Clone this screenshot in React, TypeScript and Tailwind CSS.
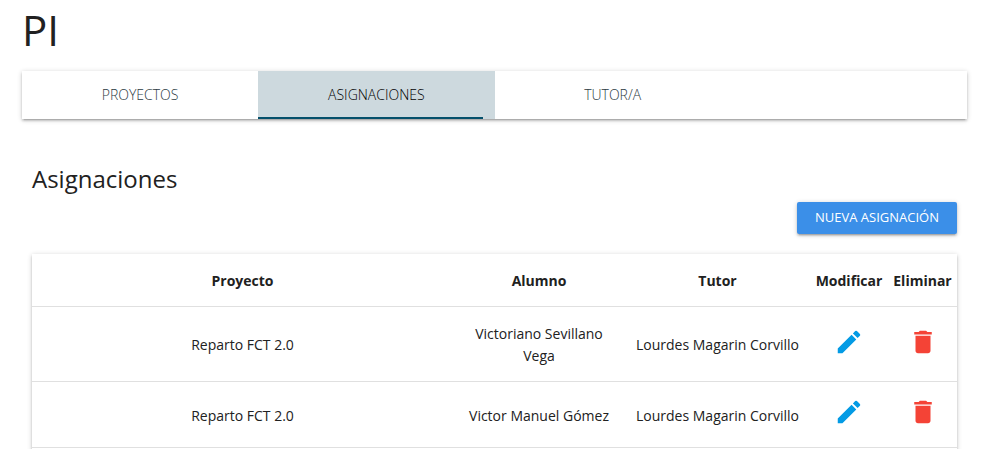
import { MdDelete, MdEdit } from "react-icons/md";

const tabs = [
  { label: "Proyectos", active: false },
  { label: "Asignaciones", active: true },
  { label: "Tutor/a", active: false },
];

const rows = [
  { proyecto: "Reparto FCT 2.0", alumno: "Victoriano Sevillano Vega", tutor: "Lourdes Magarin Corvillo" },
  { proyecto: "Reparto FCT 2.0", alumno: "Victor Manuel Gómez", tutor: "Lourdes Magarin Corvillo" },
];

const raised =
  "shadow-[0_2px_2px_0_rgba(0,0,0,0.14),0_3px_1px_-2px_rgba(0,0,0,0.12),0_1px_5px_0_rgba(0,0,0,0.2)]";

function Tabs() {
  return (
    <nav className={`mt-3 flex h-12 bg-white ${raised}`}>
      {tabs.map((tab) => (
        <a
          key={tab.label}
          href="#"
          aria-current={tab.active ? "page" : undefined}
          className={`relative flex w-1/4 items-center justify-center text-sm font-light uppercase ${
            tab.active ? "bg-[#cdd9de] text-black" : "text-[#2b3a42]"
          }`}
        >
          {tab.label}
          {tab.active && <span className="absolute bottom-0 left-0 h-0.5 w-[95%] bg-[#04506b]" />}
        </a>
      ))}
    </nav>
  );
}

function AssignmentsTable() {
  return (
    <div className={`mt-5 bg-white pb-4 ${raised}`}>
      <table className="w-full table-fixed border-separate border-spacing-0 text-center text-sm leading-[22px]">
        <colgroup>
          <col />
          <col className="w-[172px]" />
          <col className="w-[185px]" />
          <col className="w-[78px]" />
          <col className="w-[69px]" />
        </colgroup>
        <thead>
          <tr>
            {["Proyecto", "Alumno", "Tutor", "Modificar", "Eliminar"].map((title) => (
              <th key={title} scope="col" className="border-b border-[#e0e0e0] pt-4 pb-[14px] font-bold">
                {title}
              </th>
            ))}
          </tr>
        </thead>
        <tbody>
          {rows.map((row) => (
            <tr key={row.alumno}>
              <td className="border-b border-[#e0e0e0] px-1 pt-4 pb-[14px]">{row.proyecto}</td>
              <td className="border-b border-[#e0e0e0] px-3 pt-4 pb-[14px]">{row.alumno}</td>
              <td className="border-b border-[#e0e0e0] px-1 pt-4 pb-[14px]">{row.tutor}</td>
              <td className="border-b border-[#e0e0e0] pt-[15px] pb-5">
                <button type="button" aria-label={`Modificar ${row.alumno}`} className="block w-full text-[#039be5]">
                  <MdEdit className="mx-auto size-[30px]" />
                </button>
              </td>
              <td className="border-b border-[#e0e0e0] pt-[15px] pb-5">
                <button type="button" aria-label={`Eliminar ${row.alumno}`} className="block w-full text-[#f44336]">
                  <MdDelete className="mx-auto size-[30px]" />
                </button>
              </td>
            </tr>
          ))}
        </tbody>
      </table>
    </div>
  );
}

export default function App() {
  return (
    <main className="bg-white pr-[21px] pl-[22px] font-['Open_Sans','Noto_Sans',sans-serif] text-[#212121]">
      <h1 className="text-[42px] leading-[59px]">PI</h1>
      <Tabs />
      <section className="mt-10 px-[10px]">
        <h2 className="pb-[3px] text-2xl leading-10">Asignaciones</h2>
        <div className="flex justify-end">
          <button
            type="button"
            className={`h-8 rounded-xs bg-[#3b8fe8] px-[18px] text-[13px] uppercase text-white ${raised}`}
          >
            Nueva asignación
          </button>
        </div>
        <AssignmentsTable />
      </section>
    </main>
  );
}
